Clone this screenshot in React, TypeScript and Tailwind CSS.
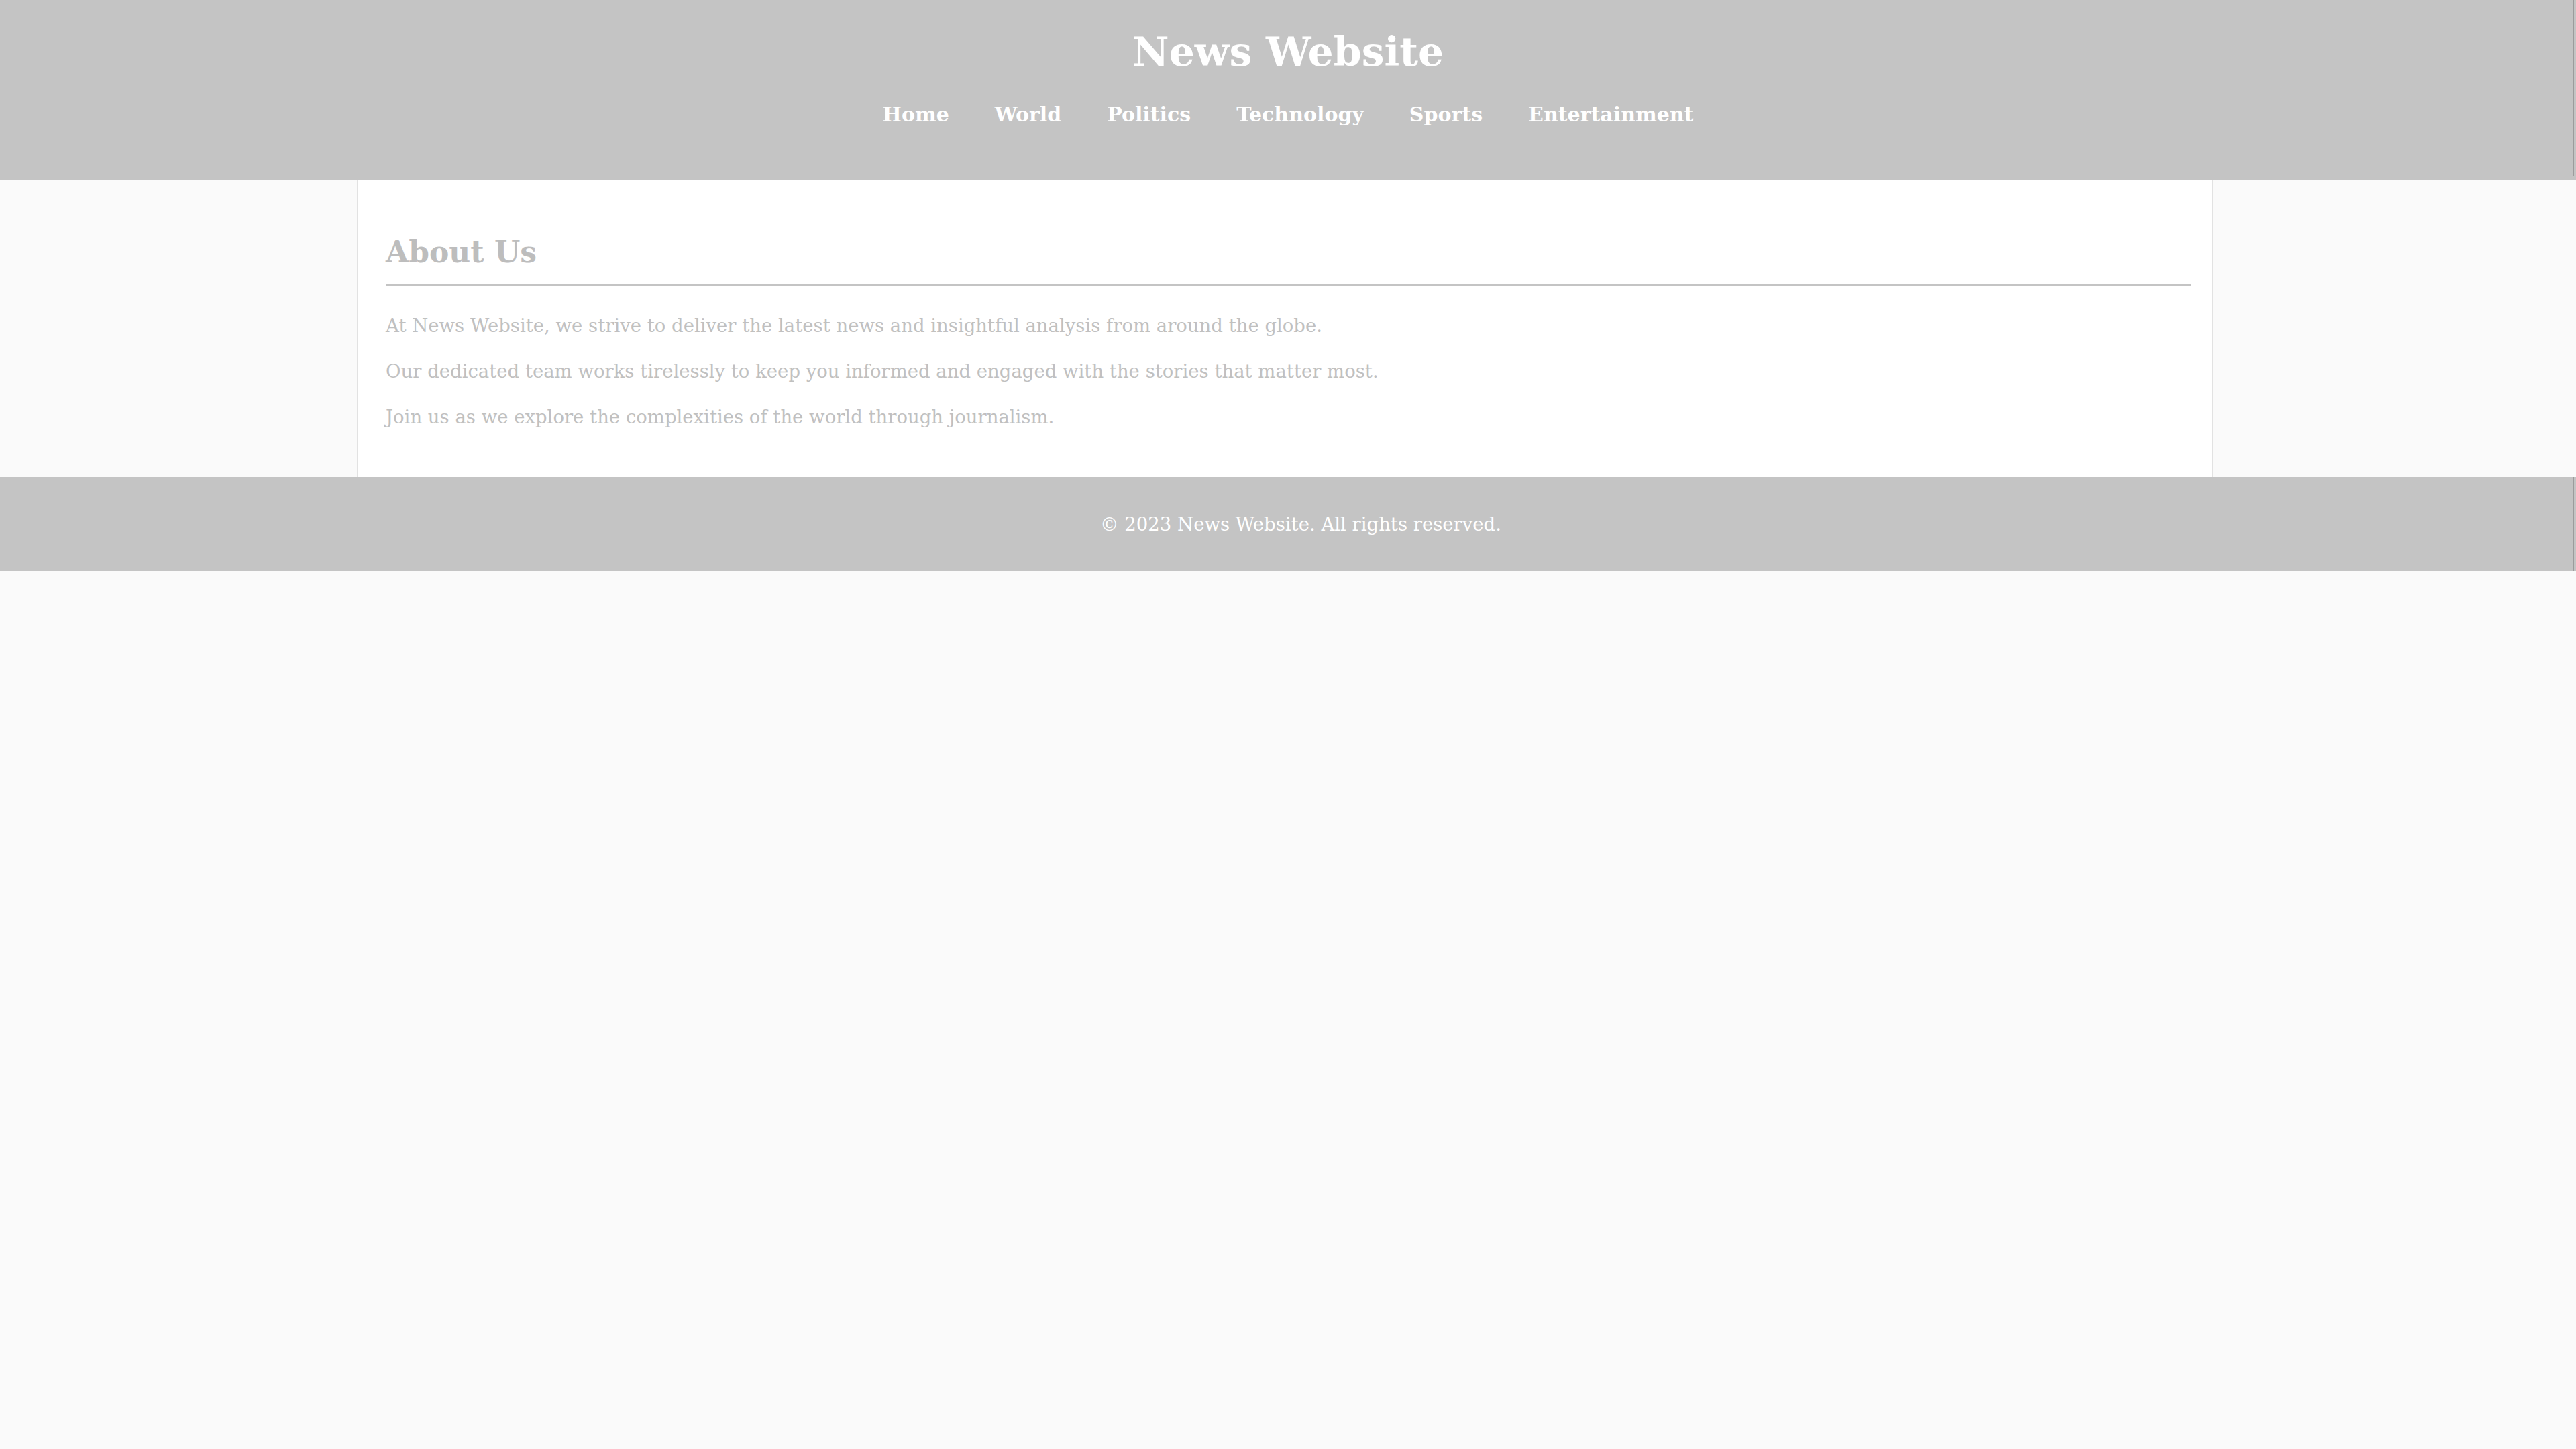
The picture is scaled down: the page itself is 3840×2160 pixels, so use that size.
import React from "react";

const serif = { fontFamily: '"DejaVu Serif", "Liberation Serif", serif' };

export default function App() {
  const nav = ["Home", "World", "Politics", "Technology", "Sports", "Entertainment"];
  return (
    <div className="min-h-screen w-full bg-[#fafafa]" style={serif}>
      <header className="relative flex h-[269px] flex-col items-center bg-[#c4c4c4] pt-[37px] text-white">
        <h1 className="text-[60px] font-bold leading-[80px]">News Website</h1>
        <nav className="mt-[34px] flex items-center justify-center gap-[68px]">
          {nav.map((n) => (
            <a key={n} className="text-[30px] font-bold leading-[40px] text-white">
              {n}
            </a>
          ))}
        </nav>
        <div className="absolute right-[3px] top-0 h-[263px] w-[2px] bg-[#9c9c9c]" />
      </header>

      <main className="ml-[calc(50%-1388px)] w-[2767px] border-x border-[#e2e2e2] bg-white pb-[70px] pl-[42px] pr-[32px] pt-[79px]">
        <h2 className="border-b-[3px] border-[#c4c4c4] pb-[19px] text-[44px] font-bold leading-[56px] text-[#bdbdbd]">
          About Us
        </h2>
        <div className="mt-[39px] flex flex-col gap-[28px] text-[27.5px] leading-[40px] text-[#c0c0c0]">
          <p>At News Website, we strive to deliver the latest news and insightful analysis from around the globe.</p>
          <p>Our dedicated team works tirelessly to keep you informed and engaged with the stories that matter most.</p>
          <p>Join us as we explore the complexities of the world through journalism.</p>
        </div>
      </main>

      <footer className="relative flex h-[140px] items-center justify-center bg-[#c4c4c4] pl-[38px] text-[27.5px] text-white">
        <span className="mt-[2px]">© 2023 News Website. All rights reserved.</span>
        <div className="absolute right-[3px] top-0 h-[140px] w-[2px] bg-[#9c9c9c]" />
      </footer>
    </div>
  );
}
